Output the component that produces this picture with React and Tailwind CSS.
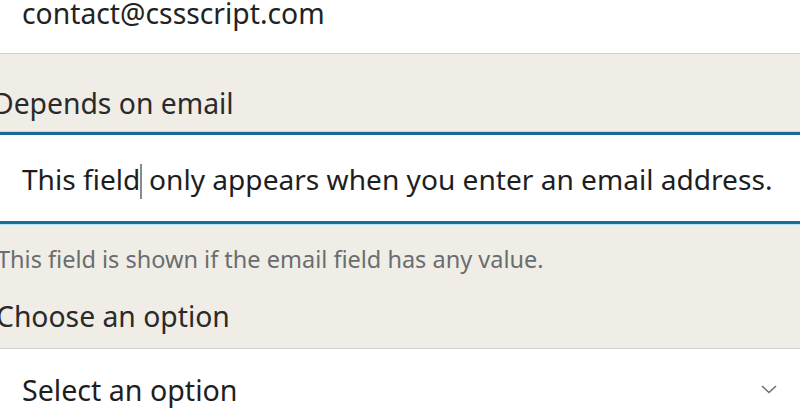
const font = { fontFamily: '"Noto Sans", "Open Sans", sans-serif' };

const App = () => {
    return (
        <div className="w-[800px] h-[419px] overflow-hidden bg-[#efede6] text-[#222222]" style={font}>
            {/* Email field */}
            <div className="h-[55px] bg-white border-b border-[#cdd1d4]">
                <div className="pl-[22px] text-[28.3px] leading-[28px] -mt-[1px]">contact@cssscript.com</div>
            </div>

            {/* Depends on email */}
            <label className="block -ml-[7px] mt-[31px] text-[28.3px] leading-[36px] text-[#2a2a2a]">
                Depends on email
            </label>
            <div className="mt-[11px] h-[92px] bg-white border-y-[3px] border-[#1b6a98] shadow-[0_0_0_1px_#b4e0f2] flex items-center pt-[3px] pl-[22px]">
                <span className="text-[28.1px] text-[#1e1e1e]">
                    This field
                    <span className="inline-block w-[1.5px] h-[35px] bg-[#8a8a8a] align-middle -mt-[2px]" />
                    {" "}only appears when you enter an email address.
                </span>
            </div>
            <p className="-ml-[3px] mt-[20px] text-[23.5px] leading-[30px] text-[#6a6d70]">
                This field is shown if the email field has any value.
            </p>

            {/* Choose an option */}
            <label className="block -ml-[4px] mt-[24px] text-[28.3px] leading-[36px] text-[#2a2a2a]">
                Choose an option
            </label>
            <div className="mt-[14px] h-[80px] bg-white border-t border-[#d2d2d2] flex items-start justify-between pl-[22px] pr-[23px]">
                <span className="mt-[23px] text-[28.6px] leading-[36px] text-[#1e1e1e]">Select an option</span>
                <svg className="mt-[36px]" width="16" height="9" viewBox="0 0 16 9" fill="none">
                    <polyline points="1,1 8,7.5 15,1" stroke="#707070" strokeWidth="1.6" />
                </svg>
            </div>
        </div>
    );
};

export default App;
